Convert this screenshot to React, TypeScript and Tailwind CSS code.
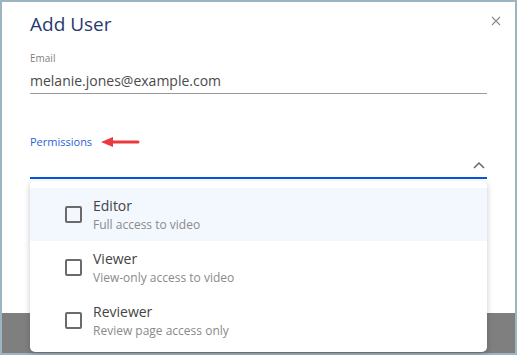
import { useState } from "react";

type Role = { id: string; label: string; desc: string };

const roles: Role[] = [
  { id: "editor", label: "Editor", desc: "Full access to video" },
  { id: "viewer", label: "Viewer", desc: "View-only access to video" },
  { id: "reviewer", label: "Reviewer", desc: "Review page access only" },
];

function CloseIcon() {
  return (
    <svg width="10" height="10" viewBox="0 0 10 10" className="text-[#8a8a8a]">
      <path d="M1 1L9 9M9 1L1 9" stroke="currentColor" strokeWidth="1.1" fill="none" />
    </svg>
  );
}

function ChevronUp() {
  return (
    <svg width="12" height="8" viewBox="0 0 12 8" className="text-[#666]">
      <path d="M1 7L6 2L11 7" stroke="currentColor" strokeWidth="1.5" fill="none" />
    </svg>
  );
}

function RedArrow() {
  return (
    <svg width="40" height="12" viewBox="0 0 40 12">
      <path d="M12 6H38" stroke="#e83a3f" strokeWidth="3" strokeLinecap="round" />
      <path d="M1 6L13 1V11Z" fill="#e83a3f" />
    </svg>
  );
}

export default function App() {
  const [checked, setChecked] = useState<string[]>([]);

  const toggle = (id: string) => {
    setChecked((prev) =>
      prev.includes(id) ? prev.filter((x) => x !== id) : [...prev, id]
    );
  };

  return (
    <div
      className="w-[517px] h-[355px] bg-[#9db4c1] p-[2px]"
      style={{ fontFamily: '"Open Sans", "Noto Sans", sans-serif' }}
    >
      <div className="relative w-full h-full bg-[#7f7f7f]">
        {/* modal */}
        <div className="relative h-[311px] bg-white px-[28px] pt-[8px]">
          <button className="absolute right-[13px] top-[13px] p-[1px]" aria-label="Close">
            <CloseIcon />
          </button>
          <h2 className="text-[19px] leading-[28px] text-[#283a6e]">Add User</h2>

          <div className="mt-[13px] w-[457px]">
            <label className="block text-[10px] leading-[14px] text-[#808080]">Email</label>
            <div className="mt-[6px] pb-[2px] border-b border-[#9a9a9a] text-[14px] leading-[20px] text-[#4a4a4a]">
              melanie.jones@example.com
            </div>
          </div>

          <div className="mt-[40px] w-[457px]">
            <div className="flex items-center gap-[8px]">
              <span className="text-[11px] leading-[16px] text-[#1f62d6]">Permissions</span>
              <RedArrow />
            </div>
            <div className="h-[29px] flex items-center justify-end pr-[2px] pt-[2px] border-b-2 border-[#0a53e0]">
              <ChevronUp />
            </div>
          </div>
        </div>

        {/* dropdown */}
        <div className="absolute left-[28px] top-[179px] w-[457px] h-[171px] bg-white rounded-[5px] shadow-[0_2px_6px_rgba(0,0,0,0.22)] pt-[7px]">
          {roles.map((r, i) => (
            <div
              key={r.id}
              onClick={() => toggle(r.id)}
              className={`h-[53px] flex items-center pl-[35px] cursor-pointer ${
                i === 0 ? "bg-[#f3f7fe]" : "bg-white"
              }`}
            >
              <div
                className={`w-[17px] h-[17px] rounded-[2px] border-2 ${
                  checked.includes(r.id) ? "border-[#0a53e0] bg-[#0a53e0]" : "border-[#6b6b6b]"
                }`}
              />
              <div className="ml-[11px] flex flex-col">
                <span className="text-[14px] leading-[20px] text-[#444]">{r.label}</span>
                <span className="text-[12px] leading-[17px] text-[#8a8a8a]">{r.desc}</span>
              </div>
            </div>
          ))}
        </div>
      </div>
    </div>
  );
}
